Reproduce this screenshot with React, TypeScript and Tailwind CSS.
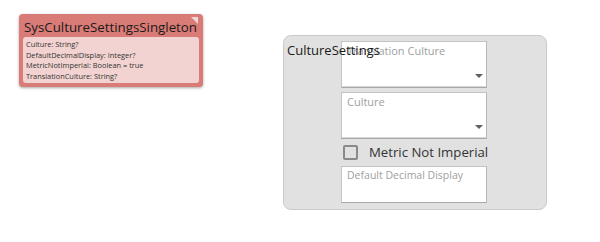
import React from "react";

const font = { fontFamily: '"Open Sans", "Noto Sans", sans-serif' };

function Dropdown({ label }: { label: string }) {
  return (
    <div className="relative w-[146px] h-[47px] bg-white border border-[#c4c4c4] border-b-[#a8a8a8] border-r-[#b8b8b8] shadow-[inset_0_-1px_0_#d8d8d8]">
      <div className="pl-[5px] pt-[2px] text-[11px] leading-[14px] text-[#a0a0a0]">{label}</div>
      <div className="absolute right-[3px] top-[32px] w-0 h-0 border-l-[4px] border-r-[4px] border-t-[4px] border-l-transparent border-r-transparent border-t-[#606060]" />
    </div>
  );
}

export default function App() {
  return (
    <div className="w-[600px] h-[242px] bg-white relative overflow-hidden" style={font}>
      <div className="flex">
        {/* Left card */}
        <div className="ml-[19px] mt-[14px] w-[184px] h-[73px] rounded-[4px] bg-[#d97b76] shadow-[0_1px_3px_rgba(0,0,0,0.35)] relative px-[4px] pt-[3px]">
          <div className="text-[13.3px] leading-[20px] text-[#1a1a1a] pl-[1px]">SysCultureSettingsSingleton</div>
          <div className="absolute right-[5px] top-[3px] w-0 h-0 border-t-[7px] border-l-[7px] border-t-[#f2d6d2] border-l-transparent" />
          <div className="rounded-[3px] bg-[#f2d3d1] h-[46px] px-[3px] pt-[2px] text-[7.4px] leading-[10.5px] text-[#333]">
            <div>Culture: String?</div>
            <div>DefaultDecimalDisplay: Integer?</div>
            <div>MetricNotImperial: Boolean = true</div>
            <div>TranslationCulture: String?</div>
          </div>
        </div>

        {/* Right panel */}
        <div className="ml-[80px] mt-[35px] w-[264px] h-[175px] rounded-[8px] bg-[#e1e1e1] border border-[#cacaca] relative">
          <div className="absolute left-[57px] top-[5px] flex flex-col">
            <Dropdown label="Translation Culture" />
            <div className="h-[4px]" />
            <Dropdown label="Culture" />
            <div className="flex items-center mt-[5px] ml-[2px] h-[16px]">
              <div className="w-[15px] h-[15px] rounded-[2px] border-2 border-[#8a8a8a] bg-[#e1e1e1]" />
              <span className="ml-[11px] text-[13.2px] leading-[16px] text-[#333]">Metric Not Imperial</span>
            </div>
            <div className="mt-[6px] w-[146px] h-[37px] bg-white border border-[#c4c4c4] border-b-[#a8a8a8] border-r-[#b8b8b8]">
              <div className="pl-[5px] pt-[1px] text-[10.5px] leading-[14px] text-[#a0a0a0]">Default Decimal Display</div>
            </div>
          </div>
          <div className="absolute left-[3px] top-[6px] text-[13px] leading-[16px] text-[#1a1a1a]">CultureSettings</div>
        </div>
      </div>
    </div>
  );
}
